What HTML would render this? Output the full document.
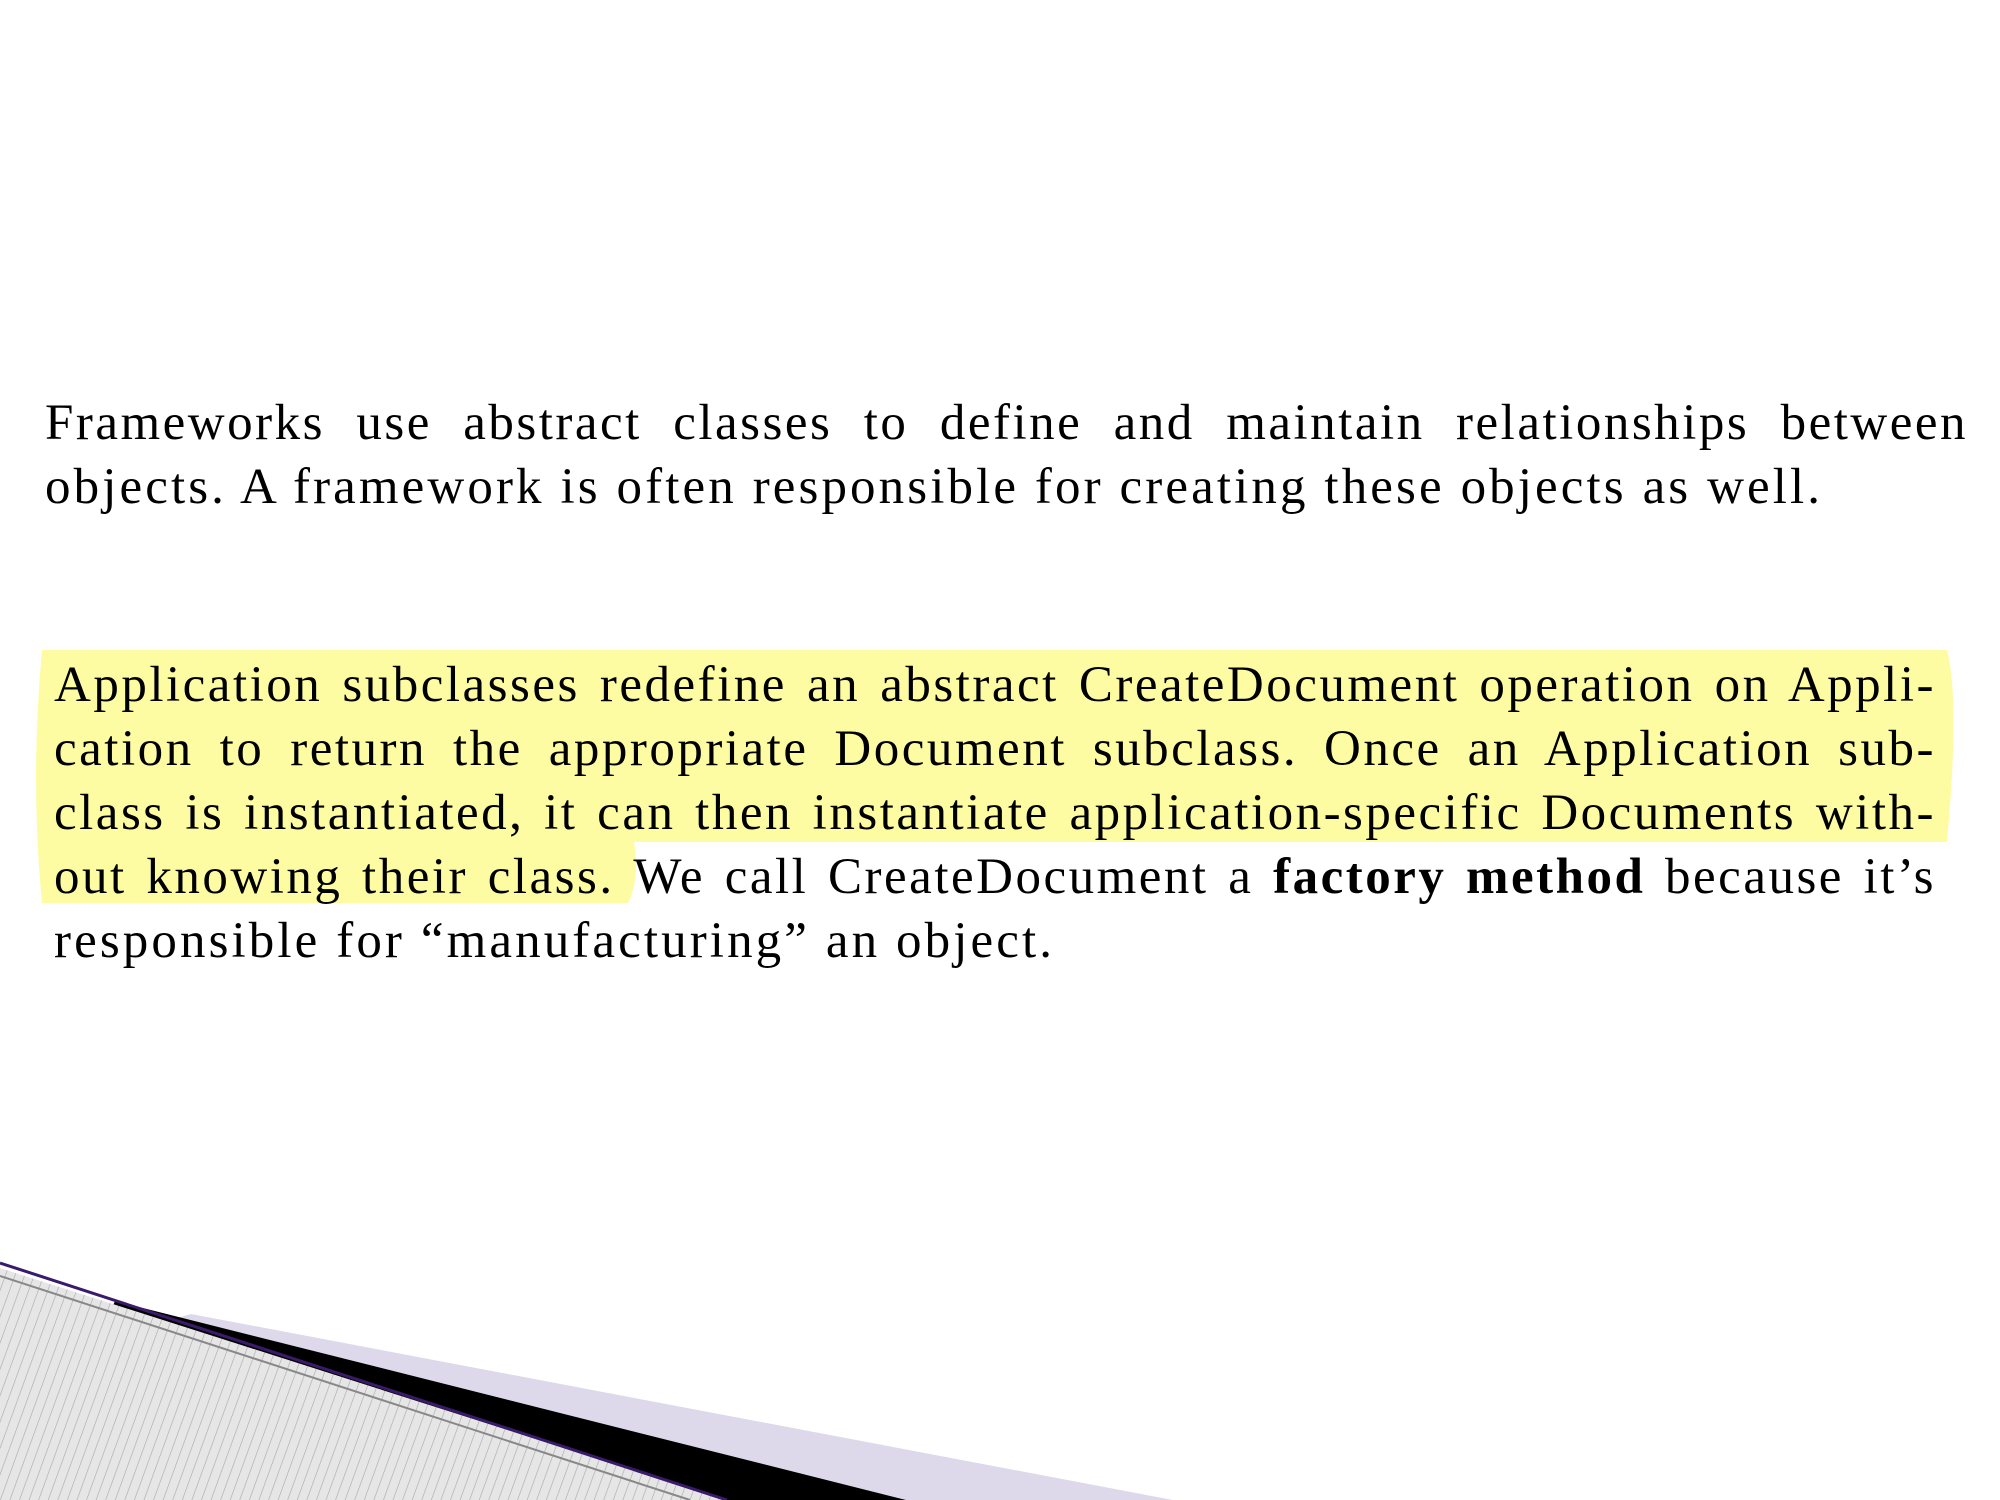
<!DOCTYPE html>
<html><head><meta charset="utf-8"><style>
html,body{margin:0;padding:0;background:#fff;width:2000px;height:1500px;overflow:hidden;position:relative}
.l{position:absolute;font-family:"Liberation Serif",serif;font-size:51px;line-height:64px;color:#000;white-space:nowrap;height:64px;letter-spacing:3.1px}
.j{text-align:justify;text-align-last:justify;white-space:normal;letter-spacing:2.5px}
</style></head><body>
<svg width="2000" height="1500" style="position:absolute;left:0;top:0">
<defs>
<pattern id="h" width="9" height="9" patternUnits="userSpaceOnUse" patternTransform="rotate(20)">
<rect width="9" height="9" fill="#e6e6e6"/><line x1="0" y1="0" x2="0" y2="9" stroke="#a8a8a8" stroke-width="1.2"/>
</pattern>
</defs>
<path d="M42,650 H1947 Q1960,700 1947,842 H634 Q640,880 628,903 H42 Q30,780 42,650Z" fill="#fdfca2"/>
<polygon points="191,1314 1173,1500 700,1500 100,1340" fill="#ded9ea"/>
<polygon points="100,1335 115,1301 906,1500 727,1500" fill="#000"/>
<polygon points="0,1268 727,1500 0,1500" fill="url(#h)"/>
<line x1="0" y1="1263" x2="727" y2="1500" stroke="#3a1a6a" stroke-width="3"/>
<line x1="0" y1="1276" x2="690" y2="1500" stroke="#888" stroke-width="2"/>
</svg>
<div class="l j" style="left:45px;top:391px;width:1923px">Frameworks use abstract classes to define and maintain relationships between</div>
<div class="l" style="left:45px;top:455px">objects. A framework is often responsible for creating these objects as well.</div>
<div class="l j" style="left:54px;top:653px;width:1882px">Application subclasses redefine an abstract CreateDocument operation on Appli-</div>
<div class="l j" style="left:54px;top:717px;width:1882px">cation to return the appropriate Document subclass. Once an Application sub-</div>
<div class="l j" style="left:54px;top:781px;width:1882px">class is instantiated, it can then instantiate application-specific Documents with-</div>
<div class="l j" style="left:54px;top:845px;width:1882px">out knowing their class. We call CreateDocument a <b>factory method</b> because it’s</div>
<div class="l" style="left:54px;top:909px">responsible for “manufacturing” an object.</div>
</body></html>
